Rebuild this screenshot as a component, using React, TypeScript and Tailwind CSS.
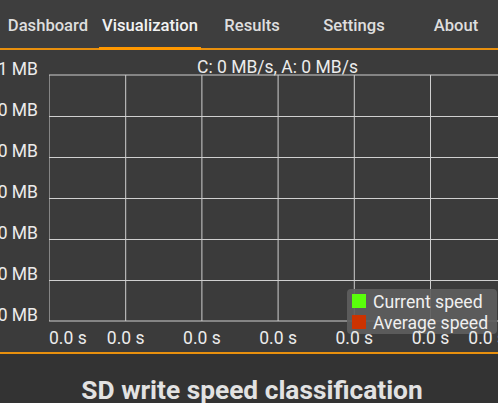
import React from "react";

const tabs = ["Dashboard", "Visualization", "Results", "Settings", "About"];
const STEP_X = 76.2;
const STEP_Y = 41;

function ChartGrid() {
  const ys = Array.from({ length: 7 }, (_, i) => (i === 0 || i === 6 ? 1 + i * STEP_Y : 1.5 + i * STEP_Y));
  const xs = Array.from({ length: 7 }, (_, i) => (i === 0 ? 0 : 0.5 + i * STEP_X));
  return (
    <svg width="457" height="248" className="block">
      {ys.map((y) => (
        <line key={y} x1="0" x2="457" y1={y} y2={y} stroke="#cfcfcf" strokeWidth="1" />
      ))}
      {xs.map((x) => (
        <line key={x} x1={x} x2={x} y1="1" y2="247" stroke="#cfcfcf" strokeWidth="1" />
      ))}
    </svg>
  );
}

export default function App() {
  return (
    <div
      className="w-[498px] h-[403px] overflow-hidden bg-[#3c3c3c] text-[#ececec]"
      style={{ fontFamily: "Roboto, 'Noto Sans', sans-serif" }}
    >
      {/* tab bar */}
      <div className="h-[50px] bg-[#3e3e3e] border-b-2 border-[#e8900e]">
        <div className="flex h-[48px] ml-[-3px]">
          {tabs.map((t) => (
            <div key={t} className="relative w-[102px] shrink-0 flex items-center justify-center pt-[3px]">
              <span
                className={
                  "text-[16.6px] font-medium leading-[16px] whitespace-nowrap " +
                  (t === "Visualization" ? "text-[#f2f2f2]" : "text-[#dedede]")
                }
              >
                {t}
              </span>
              {t === "Visualization" && (
                <div className="absolute left-0 right-0 bottom-[-2px] h-[3px] bg-[#ff9800]" />
              )}
            </div>
          ))}
        </div>
      </div>

      {/* chart */}
      <div className="h-[302px] bg-[#3b3b3b]">
        <div className="h-[24px] pt-[9px] pl-[49px]">
          <div className="w-[457px] text-center text-[17.5px] leading-[17px] whitespace-nowrap">
            C: 0 MB/s, A: 0 MB/s
          </div>
        </div>
        <div className="flex h-[248px]">
          <div className="w-[49px] shrink-0 -mt-[13px] pr-[11px] flex flex-col items-end">
            {["1 MB", "0 MB", "0 MB", "0 MB", "0 MB", "0 MB", "0 MB"].map((l, i) => (
              <div key={i} className="h-[41px] shrink-0 text-[17.5px] leading-[16px] whitespace-nowrap">
                {l}
              </div>
            ))}
          </div>
          <div className="relative w-[457px] shrink-0">
            <ChartGrid />
            <div className="absolute left-[298px] top-[215px] w-[150px] h-[45px] rounded-[4px] bg-[rgba(94,94,94,0.92)] px-[5px] pt-[5px]">
              <div className="flex h-[21px] items-start gap-[7px]">
                <div className="w-[14px] h-[14px] shrink-0 bg-[#59ff0a]" />
                <span className="text-[17.6px] leading-[16px] text-[#f0f0f0] whitespace-nowrap">Current speed</span>
              </div>
              <div className="flex h-[21px] items-start gap-[7px]">
                <div className="w-[14px] h-[14px] shrink-0 bg-[#cc3300]" />
                <span className="text-[17.6px] leading-[16px] text-[#f0f0f0] whitespace-nowrap">Average speed</span>
              </div>
            </div>
          </div>
        </div>
        <div className="pl-[49px]">
          <div className="relative w-[457px] h-[30px]">
            {Array.from({ length: 7 }, (_, i) => {
              const pos =
                i === 0
                  ? { left: 0 }
                  : i === 6
                  ? { right: 0 }
                  : { left: `${i * STEP_X + 0.5}px`, transform: "translateX(-50%)" };
              return (
                <span
                  key={i}
                  className="absolute top-[8px] text-[17.5px] leading-[16px] whitespace-nowrap"
                  style={pos}
                >
                  0.0 s
                </span>
              );
            })}
          </div>
        </div>
      </div>

      {/* bottom */}
      <div className="h-[51px] border-t-2 border-[#e8900e] bg-[#333333] pt-[21px] pl-[6px] flex justify-center">
        <h1 className="text-[26.3px] font-bold leading-[30px] text-[#e2e2e2] whitespace-nowrap">
          SD write speed classification
        </h1>
      </div>
    </div>
  );
}
